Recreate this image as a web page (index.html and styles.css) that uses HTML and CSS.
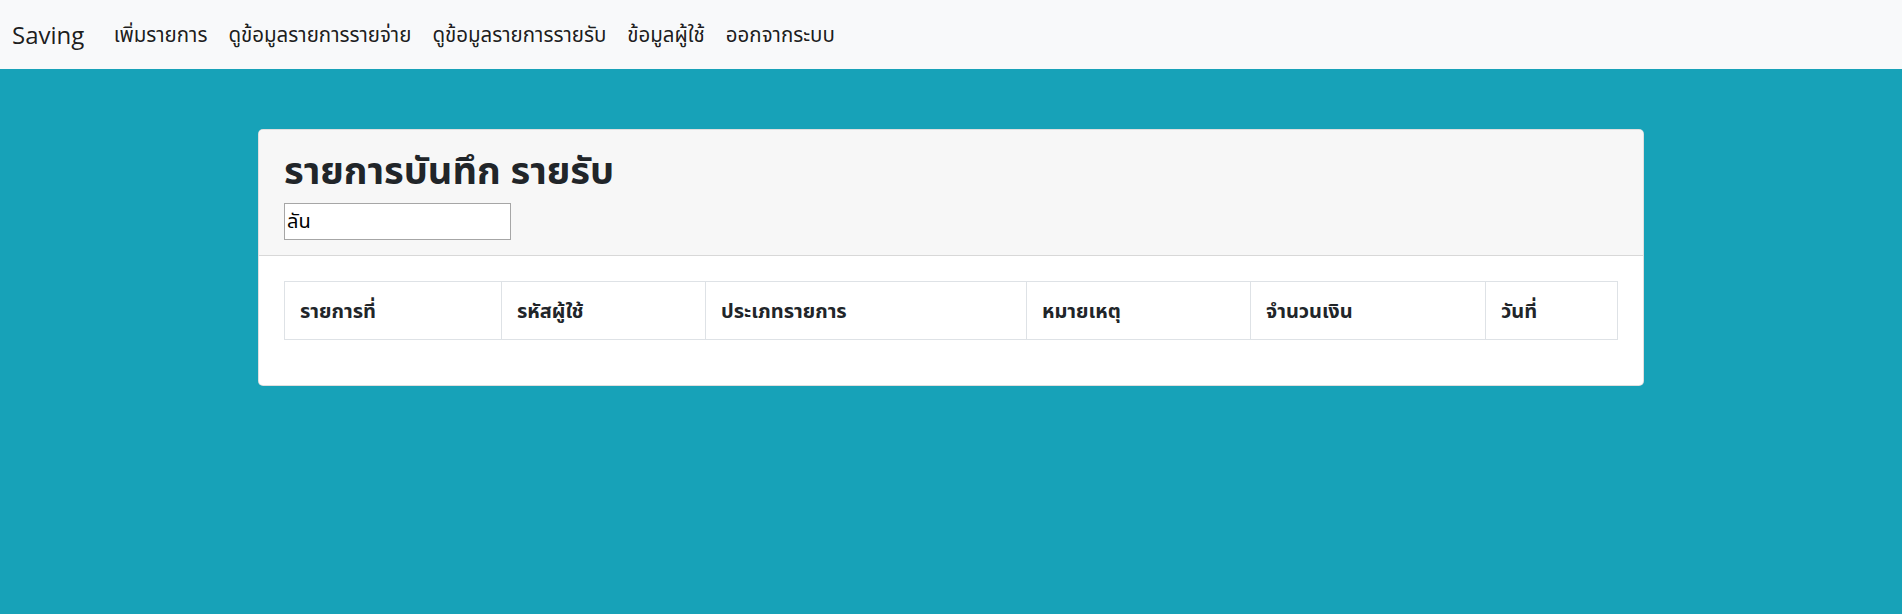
FILE: index.html
```html
<!DOCTYPE html>
<html lang="th">
<head>
<meta charset="utf-8">
<title>Saving</title>
<link rel="stylesheet" href="styles.css">
</head>
<body>
<nav class="navbar">
  <a class="brand" href="#">Saving</a>
  <ul class="nav">
    <li><a class="nav-link" href="#">เพิ่มรายการ</a></li>
    <li><a class="nav-link" href="#">ดูข้อมูลรายการรายจ่าย</a></li>
    <li><a class="nav-link" href="#">ดูข้อมูลรายการรายรับ</a></li>
    <li><a class="nav-link" href="#">ข้อมูลผู้ใช้</a></li>
    <li><a class="nav-link" href="#">ออกจากระบบ</a></li>
  </ul>
</nav>
<main class="container">
  <section class="card">
    <header class="card-header">
      <h2 class="title">รายการบันทึก รายรับ</h2>
      <input class="search" type="text" value="ลัน">
    </header>
    <div class="card-body">
      <table class="table">
        <tr>
          <th class="c1">รายการที่</th>
          <th class="c2">รหัสผู้ใช้</th>
          <th class="c3">ประเภทรายการ</th>
          <th class="c4">หมายเหตุ</th>
          <th class="c5">จำนวนเงิน</th>
          <th class="c6">วันที่</th>
        </tr>
      </table>
    </div>
  </section>
</main>
</body>
</html>
```
FILE: styles.css
```css
* { box-sizing: border-box; }
html, body { height: 100%; }
body {
  margin: 0;
  background: #17a2b8;
  color: #212529;
  font-family: "Open Sans", "Noto Sans Thai", "Noto Sans", sans-serif;
  font-size: 20px;
  line-height: 1.5;
}
.navbar {
  display: flex;
  align-items: center;
  background: #f8f9fa;
  height: 69px;
  padding: 0 20px 0 12px;
}
.brand {
  font-size: 24px;
  line-height: 37px;
  color: rgba(0,0,0,.9);
  text-decoration: none;
  margin-right: 19px;
}
.nav {
  display: flex;
  list-style: none;
  margin: 0;
  padding: 0;
}
.nav-link {
  display: block;
  padding: 10px 10.5px;
  color: rgba(0,0,0,.9);
  text-decoration: none;
  font-size: 20.5px;
}
.container {
  max-width: 1425px;
  margin: 60px auto 0;
  padding: 0 19.5px;
}
.card {
  background: #fff;
  border: 1px solid rgba(0,0,0,.125);
  border-radius: 5px;
}
.card-header {
  background: #f7f7f7;
  padding: 15px 25px;
  border-bottom: 1px solid rgba(0,0,0,.125);
  border-radius: 4px 4px 0 0;
}
.title {
  margin: 0 0 10px;
  font-size: 38px;
  line-height: 48px;
  font-weight: 700;
}
.search {
  display: block;
  width: 227px;
  height: 37px;
  font: inherit;
  font-size: 20px;
  padding: 1px 2px;
  border: 1px solid #a6a6a6;
  background: #fff;
  color: #000;
}
.card-body {
  padding: 25px;
}
.table {
  width: 100%;
  border-collapse: collapse;
  margin-bottom: 20px;
}
.table th {
  border: 1px solid #dee2e6;
  padding: 14px 15px 13px;
  text-align: left;
  font-weight: 700;
  line-height: 30px;
}
.c1 { width: 217px; }
.c2 { width: 204px; }
.c3 { width: 321px; }
.c4 { width: 224px; }
.c5 { width: 235px; }
.c6 { width: auto; }
```
